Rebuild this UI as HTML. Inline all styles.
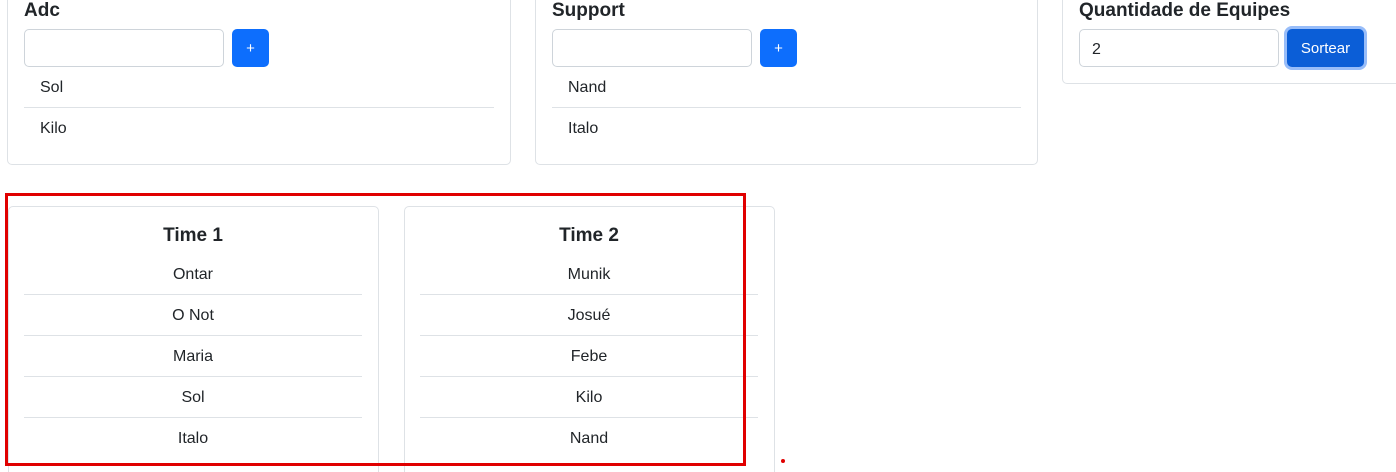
<!DOCTYPE html>
<html><head><style>
html,body{margin:0;width:1396px;height:472px;overflow:hidden}
body{background:#fff;font-family:"Liberation Sans",sans-serif;color:#212529;position:relative}
.card{position:absolute;border:1px solid #dee2e6;border-radius:5px;background:#fff;box-sizing:border-box}
.t{position:absolute;font-size:19px;font-weight:bold;line-height:22px}
.in{position:absolute;border:1px solid #ced4da;border-radius:5px;height:38px;width:200px;box-sizing:border-box;font-size:16px;padding:0 12px;line-height:38px}
.btn{position:absolute;background:#0d6efd;color:#fff;border-radius:5px;height:38px;box-sizing:border-box;text-align:center;line-height:40px;font-size:15px}
.li{position:absolute;font-size:16px;line-height:41px;height:41px;box-sizing:border-box}
.div{border-bottom:1px solid #dee2e6}
.c{text-align:center}
</style></head><body>
<div class="card" style="left:7px;top:-20px;width:504px;height:185px"></div>
<div class="card" style="left:535px;top:-20px;width:503px;height:185px"></div>
<div class="card" style="left:1062px;top:-20px;width:360px;height:104px"></div>

<div class="t" style="left:24px;top:0">Adc</div>
<div class="in" style="left:24px;top:29px"></div>
<div class="btn" style="left:232px;top:29px;width:37px">+</div>
<div class="li div" style="left:24px;top:67px;width:470px;padding-left:16px">Sol</div>
<div class="li" style="left:24px;top:108px;width:470px;padding-left:16px">Kilo</div>

<div class="t" style="left:552px;top:0">Support</div>
<div class="in" style="left:552px;top:29px"></div>
<div class="btn" style="left:760px;top:29px;width:37px">+</div>
<div class="li div" style="left:552px;top:67px;width:469px;padding-left:16px">Nand</div>
<div class="li" style="left:552px;top:108px;width:469px;padding-left:16px">Italo</div>

<div class="t" style="left:1079px;top:0">Quantidade de Equipes</div>
<div class="in" style="left:1079px;top:29px;line-height:40px">2</div>
<div class="btn" style="left:1287px;top:29px;width:77px;background:#0b5ed7;box-shadow:0 0 0 3px #98bdf9">Sortear</div>

<div class="card" style="left:8px;top:206px;width:371px;height:280px"></div>
<div class="card" style="left:404px;top:206px;width:371px;height:280px"></div>

<div class="t c" style="left:24px;top:225px;width:338px">Time 1</div>
<div class="li div c" style="left:24px;top:254px;width:338px">Ontar</div>
<div class="li div c" style="left:24px;top:295px;width:338px">O Not</div>
<div class="li div c" style="left:24px;top:336px;width:338px">Maria</div>
<div class="li div c" style="left:24px;top:377px;width:338px">Sol</div>
<div class="li c" style="left:24px;top:418px;width:338px">Italo</div>

<div class="t c" style="left:420px;top:225px;width:338px">Time 2</div>
<div class="li div c" style="left:420px;top:254px;width:338px">Munik</div>
<div class="li div c" style="left:420px;top:295px;width:338px">Josué</div>
<div class="li div c" style="left:420px;top:336px;width:338px">Febe</div>
<div class="li div c" style="left:420px;top:377px;width:338px">Kilo</div>
<div class="li c" style="left:420px;top:418px;width:338px">Nand</div>

<div style="position:absolute;left:5px;top:193px;width:735px;height:267px;border:3px solid #e00000"></div>
<div style="position:absolute;left:781px;top:459px;width:4px;height:4px;border-radius:50%;background:#e00000"></div>
</body></html>
